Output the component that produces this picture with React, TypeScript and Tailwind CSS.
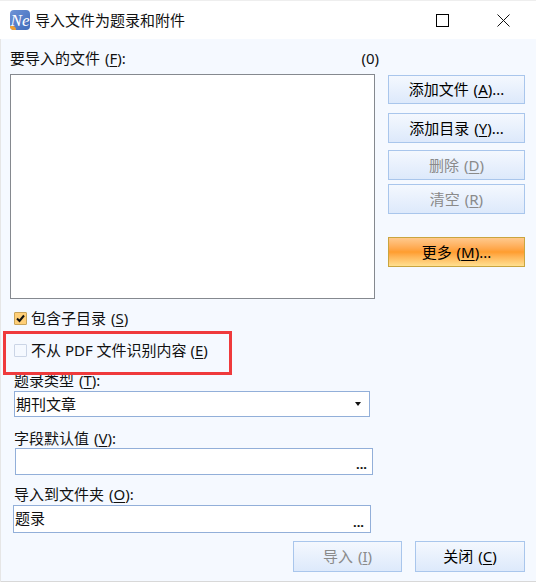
import React from "react";

const font = "font-['Noto_Sans','Noto_Sans_CJK_SC',sans-serif]";

const SideButton = ({ label, hot, disabled, className }: { label: React.ReactNode; hot?: boolean; disabled?: boolean; className?: string }) => (
  <div
    className={`flex items-center justify-center w-[137px] border text-[15px] leading-none ${
      hot
        ? "border-[#c9a53f] bg-gradient-to-b from-[#ffc98c] via-[#ff9d2e] to-[#ffe08f] text-black"
        : "border-[#a9c6ec] bg-gradient-to-b from-[#f4f8fe] to-[#dde9fb]"
    } ${disabled ? "text-[#8a8a8a]" : "text-black"} ${className ?? ""}`}
  >
    {label}
  </div>
);

const Key = ({ children }: { children: string }) => <span className="underline underline-offset-2">{children}</span>;

const App = () => {
  return (
    <div className={`relative w-[536px] h-[582px] overflow-hidden bg-[#f5f9ff] shadow-[inset_1px_0_0_#e6e6e6,inset_0_-1px_0_#d8d8d8] text-[15px] leading-5 [word-spacing:1px] text-[#111] ${font}`}>
      <header className="flex items-center h-[39px] bg-white pl-[10px] border-t border-[#eeeeee]">
        <div className="relative flex items-center justify-center w-5 h-5 rounded-[4px] overflow-hidden bg-gradient-to-br from-[#6f93d6] to-[#3f6cbc]">
          <span className="font-['Liberation_Serif',serif] italic text-[17px] leading-none text-white">Ne</span>
          <span className="absolute left-0 bottom-0 w-[6px] h-[4px] rounded-tr-[4px] bg-[#f0a030]" />
        </div>
        <span className="ml-[5px] text-[15px]">导入文件为题录和附件</span>
        <svg className="ml-auto" width="13" height="13" viewBox="0 0 13 13" fill="none" stroke="#000" strokeWidth="1">
          <rect x="0.5" y="0.5" width="12" height="12" />
        </svg>
        <svg className="ml-[48px] mr-[26px]" width="13" height="13" viewBox="0 0 13 13" fill="none" stroke="#111" strokeWidth="1">
          <path d="M0.5 0.5 L12.5 12.5 M12.5 0.5 L0.5 12.5" />
        </svg>
      </header>

      <div className="flex pl-[10px] pt-[9px]">
        <div className="w-[365px]">
          <div className="flex justify-between h-5">
            <span>要导入的文件 (<Key>F</Key>):</span>
            <span className="mr-[-4px]">(0)</span>
          </div>
          <div className="mt-[6px] h-[225px] bg-white border border-[#85898f]" />
        </div>
        <div className="ml-[13px] pt-[27px] flex flex-col">
          <SideButton className="h-[29px]" label={<>添加文件 (<Key>A</Key>)...</>} />
          <SideButton className="h-[30px] mt-[9px]" label={<>添加目录 (<Key>Y</Key>)...</>} />
          <SideButton className="h-[30px] mt-[7px]" disabled label={<>删除 (<Key>D</Key>)</>} />
          <SideButton className="h-[30px] mt-[4px]" disabled label={<>清空 (<Key>R</Key>)</>} />
          <SideButton className="h-[30px] mt-[23px]" hot label={<>更多 (<Key>M</Key>)...</>} />
        </div>
      </div>

      <div className="flex items-center h-5 mt-[9px] pl-[14px]">
        <div className="flex items-center justify-center w-[13px] h-[13px] rounded-[1px] bg-[#ffcf78] border border-[#c9a45a]">
          <svg width="9" height="9" viewBox="0 0 9 9" fill="none" stroke="#111" strokeWidth="2">
            <path d="M1 4.5 L3.5 7 L8 1.5" />
          </svg>
        </div>
        <span className="ml-[4px]">包含子目录 (<Key>S</Key>)</span>
      </div>

      <div className="flex items-center h-5 mt-[12px] pl-[14px]">
        <div className="w-[13px] h-[13px] rounded-[1px] border border-[#cbd5e6]" />
        <span className="ml-[4px] [word-spacing:0]">不从 PDF 文件识别内容 (<Key>E</Key>)</span>
      </div>

      <div className="absolute left-[3px] top-[331px] w-[229px] h-[44px] border-[3px] border-[#ef3a3c]" />

      <div className="pl-[14px] mt-[10px] h-5">题录类型 (<Key>T</Key>):</div>
      <div className="flex items-center justify-between ml-[14px] mt-[1px] w-[356px] h-[26px] bg-white border border-[#92afd9] pl-[1px] pr-[8px]">
        <span>期刊文章</span>
        <svg width="6" height="4" viewBox="0 0 6 4" fill="#111">
          <path d="M0 0 H6 L3 4 Z" />
        </svg>
      </div>

      <div className="pl-[14px] mt-[11px] h-5">字段默认值 (<Key>V</Key>):</div>
      <div className="relative ml-[15px] w-[358px] h-[27px] bg-white border border-[#92afd9]">
        <span className="absolute right-[5px] bottom-[3px] text-[13px] leading-none font-bold">...</span>
      </div>

      <div className="pl-[14px] mt-[9px] h-5">导入到文件夹 (<Key>O</Key>):</div>
      <div className="relative flex items-center ml-[13px] mt-[1px] w-[358px] h-[28px] bg-white border border-[#92afd9] pl-[1px] pb-[3px]">
        <span>题录</span>
        <span className="absolute right-[6px] bottom-[3px] text-[13px] leading-none font-bold">...</span>
      </div>

      <div className="flex justify-end gap-[13px] mt-[8px] pr-[11px]">
        <SideButton className="!w-[109px] h-[31px]" disabled label={<>导入 (<Key>I</Key>)</>} />
        <SideButton className="!w-[110px] h-[31px]" label={<>关闭 (<Key>C</Key>)</>} />
      </div>
    </div>
  );
};

export default App;
